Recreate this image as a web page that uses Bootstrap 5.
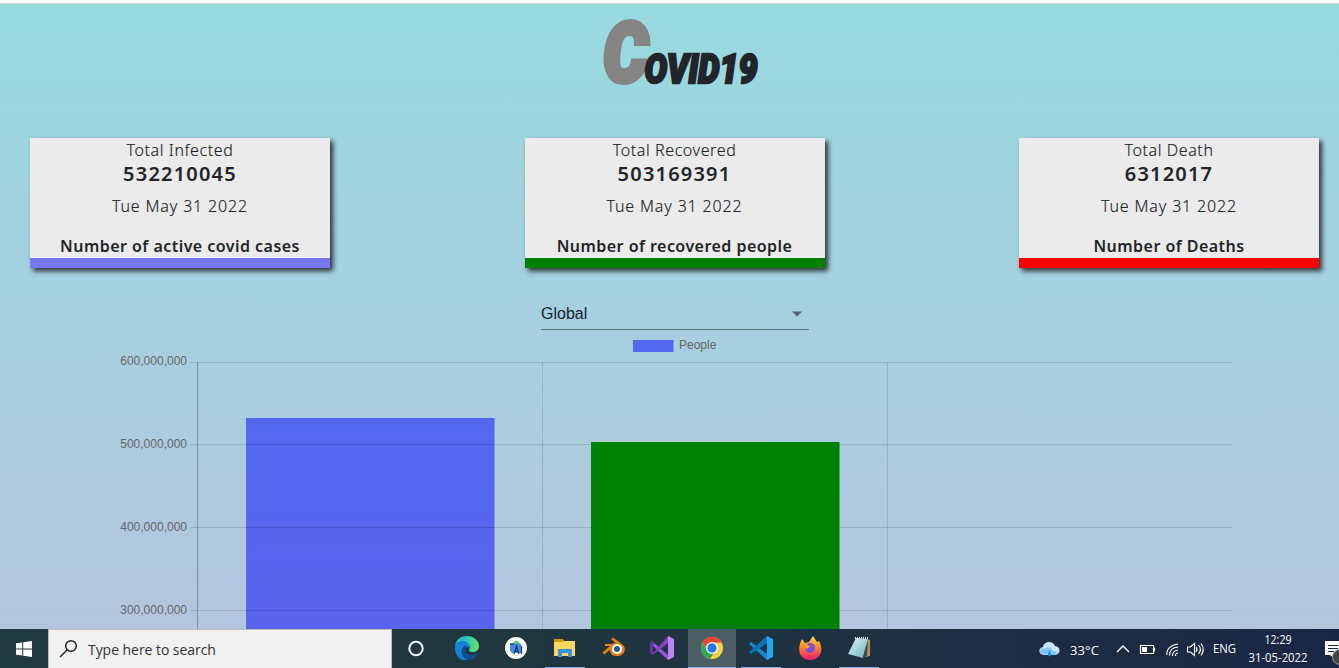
<!DOCTYPE html>
<html lang="en">
<head>
<meta charset="utf-8">
<meta name="viewport" content="width=device-width, initial-scale=1">
<title>Covid19 Tracker</title>
<link href="https://cdn.jsdelivr.net/npm/bootstrap@5.3.0/dist/css/bootstrap.min.css" rel="stylesheet">
<style>
  body { height: 668px; background: #fff; }
  .tracker { height: 626px; background: linear-gradient(#98dae0, #b4c5de); border-top: 1px solid #cfd4d5; }
  .logo { display: block; margin: 0 auto; width: 221px; height: 134px; overflow: visible; stroke-linejoin: miter; }
  .cases { padding: 0 20px 0 30px; }
  .stat { width: 300px; height: 130px; background: #ebebeb; border-bottom: 10px solid; box-shadow: 3px 3px 5px #2b2f33; color: #212529; font: 16px/24px "Noto Sans", "Open Sans", sans-serif; letter-spacing: .6px; }
  .stat-infected { border-color: #7777f6; }
  .stat-recovered { border-color: green; }
  .stat-death { border-color: red; }
  .stat p { font-weight: 300; margin: 0; white-space: nowrap; -webkit-text-stroke: .15px #212529; }
  .stat h2 + p { letter-spacing: .85px; }
  .stat h2 { font: 600 20px/24px "Noto Sans", "Open Sans", sans-serif; letter-spacing: 1.2px; margin: 0 0 8px; }
  .stat h3 { font: 600 16px/24px "Noto Sans", "Open Sans", sans-serif; letter-spacing: .46px; margin: 16px 0 0; white-space: nowrap; }
  .picker { width: 268px; height: 31px; margin: 31px 0 0 541px; border-bottom: 1px solid #60787f; font: 16px/30px "Liberation Sans", sans-serif; color: #17232a; padding-right: 6px; }
  .chart { display: block; font: 12px "Liberation Sans", sans-serif; fill: #666; }
  .taskbar { height: 39px; background: linear-gradient(90deg, #213940, #20363f 45%, #1d2d42 75%, #1a2646); color: #fff; font: 12px "Open Sans", sans-serif; }
  .start { width: 48px; height: 39px; }
  .search { width: 344px; background: #f1f1f1; border: 1px solid #bcbcbc; border-bottom: 0; color: #333; font: 14px "Open Sans", sans-serif; }
  .search span { margin-left: 7px; letter-spacing: -.05px; }
  .app { width: 48px; border-bottom: 1px solid transparent; }
  .app-wide { width: 54px; }
  .app-slim { width: 44px; }
  .app.open::after { content: ""; width: 40px; height: 1px; background: #76b1ed; position: absolute; bottom: -1px; left: calc(50% - 20px); }
  .app.current { background: #4d5e66; border-color: #76b1ed; }
</style>
</head>
<body class="d-flex flex-column overflow-hidden">
<main class="tracker overflow-hidden mt-auto">
  <svg class="logo" viewBox="559 4 221 134" font-family="Roboto, 'Liberation Sans', sans-serif" font-weight="900" font-style="italic">
    <text x="603.500" y="81" font-size="82" textLength="44" lengthAdjust="spacingAndGlyphs" fill="#848484" stroke="#848484" stroke-width="6">C</text>
    <text x="644.500" y="82.500" font-size="41" textLength="113" lengthAdjust="spacingAndGlyphs" fill="#212529" stroke="#212529" stroke-width="2.600">OVID19</text>
  </svg>
  <section class="cases d-flex justify-content-between text-center">
    <article class="stat stat-infected"><p>Total Infected</p><h2>532210045</h2><p>Tue May 31 2022</p><h3>Number of active covid cases</h3></article>
    <article class="stat stat-recovered"><p>Total Recovered</p><h2>503169391</h2><p>Tue May 31 2022</p><h3>Number of recovered people</h3></article>
    <article class="stat stat-death"><p>Total Death</p><h2>6312017</h2><p>Tue May 31 2022</p><h3>Number of Deaths</h3></article>
  </section>
  <div class="picker d-flex align-items-center justify-content-between"><span>Global</span>
    <svg width="12" height="6"><path d="M1 .5h10l-5 5z" fill="#52656c"/></svg></div>
  <svg class="chart" width="1339" height="299" viewBox="0 330 1339 299">
    <defs><linearGradient id="bar" x2="0" y2="1"><stop stop-color="#5468ef"/><stop offset="1" stop-color="#5a63ec"/></linearGradient></defs>
    <rect x="633" y="340" width="40.500" height="12" fill="#5467ef"/><text x="679" y="349">People</text>
    <g text-anchor="end"><text x="187" y="365">600,000,000</text><text x="187" y="448">500,000,000</text><text x="187" y="531">400,000,000</text><text x="187" y="614">300,000,000</text></g>
    <path d="M246 418h248.500v211H246z" fill="url(#bar)"/>
    <path d="M190 362.500h1043M190 444.500h1043M190 527.500h1043M190 610.500h1043M542.500 362v267M887.500 362v267" stroke="#000" stroke-opacity=".12"/>
    <path d="M197.500 362v267" stroke="#000" stroke-opacity=".25"/>
    <path d="M591 442h248.500v187H591z" fill="green"/>
  </svg>
</main>
<footer class="taskbar d-flex flex-shrink-0 align-items-stretch">
  <div class="start d-flex align-items-center justify-content-center"><svg width="16" height="16" fill="#fff"><path d="M0 2.300 6.200 1.400v6.100H0zM7.200 1.200 16 0v7.500H7.200zM0 8.500h6.200v6.100L0 13.700zM7.200 8.500H16V16l-8.800-1.200z"/></svg></div>
  <div class="search d-flex align-items-center">
    <svg class="ms-2" width="24" height="24" fill="none" stroke="#222" stroke-width="1.500"><circle cx="14" cy="9" r="5.300"/><path d="m10 13-7 7"/></svg>
    <span>Type here to search</span>
  </div>
  <div class="app d-flex align-items-center justify-content-center"><svg width="24" height="24"><circle cx="12" cy="12.500" r="6.700" fill="none" stroke="#fff" stroke-width="2"/></svg></div>
  <div class="app app-wide d-flex align-items-center justify-content-center"><svg width="24" height="24" viewBox="0 0 24 24"><defs><linearGradient id="eg"><stop stop-color="#22a8d8"/><stop offset=".5" stop-color="#30c6bd"/><stop offset="1" stop-color="#69e55c"/></linearGradient></defs><path d="M0 10C1 3 6 0 12 0c7 0 12 5 12 10 0 4-3 6-7 6-3 0-4-2-2-4 0-4-4-6-8-5-4 0-6 2-7 3z" fill="url(#eg)"/><path d="M0 12c0-5 4-7 8-7 4 0 7 3 7 7-2-2-5-1-5 2 0 5 6 7 12 4-3 4-6 6-10 6-7 2-12-5-12-12z" fill="#1481d5"/><path d="M10 9c-6 4-4 13 3 15 4 0 7-2 9-6-6 3-12 0-12-4 0-2 1-3 2-3z" fill="#0b4f96"/></svg></div>
  <div class="app app-slim d-flex align-items-center justify-content-center"><svg width="24" height="24"><circle cx="12" cy="12" r="11" fill="#fff"/><path d="M6 8h11v9H8l-2-2z" fill="#438af4"/><path d="M9 8c1-4 6-4 7 0z" fill="#45c985"/><path d="m10 18 2.500-8 2.500 8m-4-3h3M17.500 10v8M6 8h4" fill="none" stroke="#1d3f63" stroke-width="1.300"/></svg></div>
  <div class="app app-wide open d-flex align-items-center justify-content-center position-relative"><svg width="24" height="24"><path d="M1 3h9l1 2h11v5H1z" fill="#dc9b0c"/><path d="M1 6h8l2-1h11v15H1z" fill="#ffd664"/><path d="M5 21v-8h14v8h-4v-4H9v4z" fill="#3993da"/></svg></div>
  <div class="app app-slim d-flex align-items-center justify-content-center"><svg width="24" height="24"><path d="m9.500 8 4-1-4.500-4 2-1.500L21 9c4 4 1 11-6 11-5 0-7-3-7-6l-6 4.500-1.500-2L8 10H3V8z" fill="#ed8012"/><circle cx="15" cy="13" r="5" fill="#fff"/><circle cx="15" cy="13" r="3" fill="#265787"/></svg></div>
  <div class="app d-flex align-items-center justify-content-center" style="width:52px"><svg width="24" height="24"><path d="M0 7 2 5l16 14v5z" fill="#9a55dc"/><path d="m0 7 2-2 3 3-2 1v6l2 1-3 3-2-2z" fill="#68309a"/><path d="M2 19 18 0v7L5 17z" fill="#8744c7"/><path d="m18 0 6 3v18l-6 3z" fill="#bd85f4"/></svg></div>
  <div class="app current d-flex align-items-center justify-content-center"><svg width="24" height="24"><circle cx="12" cy="12" r="11" fill="#ffd140"/><path d="M2.500 6.500A11 11 0 0 1 21.500 6.500H12L8 14z" fill="#e84335"/><path d="M2.500 6.500 8 15l6 2-4 6A11 11 0 0 1 2.500 6.500z" fill="#31a853"/><circle cx="12" cy="12" r="6" fill="#fff"/><circle cx="12" cy="12" r="4.700" fill="#2877ed"/></svg></div>
  <div class="app open d-flex align-items-center justify-content-center position-relative" style="width:50px"><svg width="24" height="24"><path d="m0 8 2-2 16 12v6z" fill="#1689d0"/><path d="m0 16 18-16v7L2 18z" fill="#0875bd"/><path d="m18 0 6 3v18l-6 3z" fill="#27a5ef"/></svg></div>
  <div class="app d-flex align-items-center justify-content-center"><svg width="24" height="24"><defs><linearGradient id="fg" x2="0" y2="1"><stop stop-color="#ffe340"/><stop offset=".45" stop-color="#ff852c"/><stop offset="1" stop-color="#ef196f"/></linearGradient></defs><path d="m4 3 3 4 4-1 4-6 4 6 2-1c5 8 2 19-9 19C2 24-2 14 4 3z" fill="url(#fg)"/><circle cx="12" cy="12" r="5" fill="#7750d3"/><path d="m4 7 5 1 3 3-4 2z" fill="#ff9f25"/></svg></div>
  <div class="app open d-flex align-items-center justify-content-center position-relative" style="width:50px"><svg width="24" height="24"><defs><linearGradient id="ng" y2="1"><stop stop-color="#e4f7f7"/><stop offset="1" stop-color="#65afbd"/></linearGradient></defs><path d="m20 3 3 1v16l-5 1z" fill="#b99254"/><path d="m9 2 12 1-5 19-15-4z" fill="url(#ng)"/><path d="m21 3-1 17-4 1z" fill="#3f4b4b"/><path d="M8 2h13" stroke="#ddd" stroke-width="2" stroke-dasharray="1"/></svg></div>
  <div class="d-flex align-items-center ms-auto">
    <svg width="300" height="39" viewBox="1039 629 300 39" fill="#fff" font-family="'Open Sans', sans-serif" font-size="12">
      <path d="M1044 655c-6 0-6-7-1-8 1-6 10-7 12-1 6 0 6 9 0 9z" fill="#c6e6fd"/><path d="M1042 654c-5-3 0-7 3-5 2-3 6-2 7 1l6 3-3 2z" fill="#83c3f3"/><path d="M1049.500 650c-5 8 5 9 0 0" fill="#1592ec"/>
      <text x="1070" y="655" font-size="13" textLength="29">33°C</text>
      <g fill="none" stroke="#fff"><path d="m1117 652 6-6 6 6" stroke-width="1.400"/><path d="M1140.500 645.500h13v8h-13zm14 2v4" stroke-width="1.200"/><path d="M1167 655c-1-6 4-10 11-11M1169.500 655.500c0-5 3-8 8.500-8.500M1172.500 656c0-4 2-5.500 5.500-6M1175.500 656c0-2 1-3 2.500-3" stroke-width="1.100"/><path d="M1187.500 647h3l4-3.500v12l-4-3.500h-3zM1196 647q2 2.500 0 5M1198.500 645q4 4.500 0 9M1201 643.500q4.500 6 0 12" stroke-width="1.100"/></g>
      <path d="M1142 647h5v5h-5z"/>
      <text x="1213" y="653" textLength="23" lengthAdjust="spacingAndGlyphs">ENG</text>
      <text x="1264.500" y="644" textLength="27" lengthAdjust="spacingAndGlyphs">12:29</text><text x="1248.500" y="662" textLength="59" lengthAdjust="spacingAndGlyphs">31-05-2022</text>
      <path d="M1325 641h14v14h-4v4l-5-4h-5z"/><path d="M1328 645.500h10M1328 648.500h10M1328 651.500h6" stroke="#1a2646"/><circle cx="1340" cy="657" r="7.500" fill="#444" stroke="#999"/>
    </svg>
  </div>
</footer>
<script src="https://cdn.jsdelivr.net/npm/bootstrap@5.3.0/dist/js/bootstrap.bundle.min.js"></script>
</body>
</html>
